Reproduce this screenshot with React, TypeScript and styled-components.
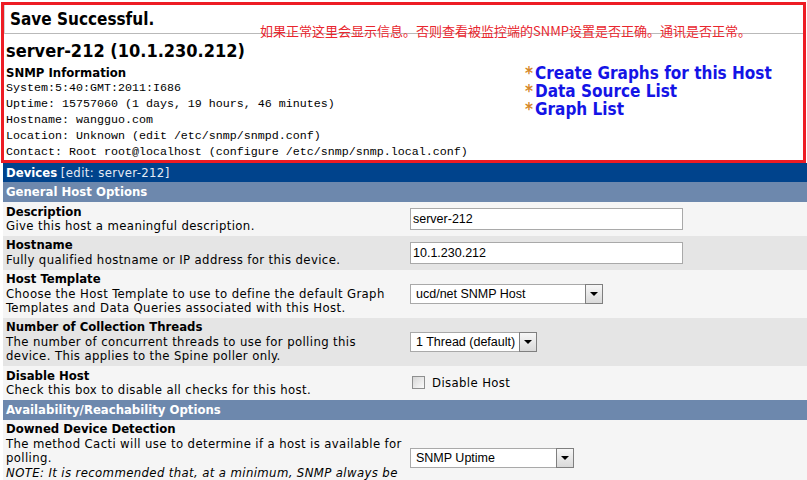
import React from "react";
import styled, { createGlobalStyle } from "styled-components";

const GlobalStyle = createGlobalStyle`
  html, body {
    margin: 0;
    padding: 0;
    background: #fff;
    overflow: hidden;
  }
  body {
    font-family: "DejaVu Sans Condensed", "DejaVu Sans", Verdana, sans-serif;
    font-size: 13px;
    color: #000;
  }
`;

const Page = styled.div`
  width: 807px;
  height: 480px;
  overflow: hidden;
`;

/* red frame round the save result */
const ResultBox = styled.div`
  position: relative;
  margin: 2px 1px 0 1px;
  border: 3px solid #ed1c24;
  background: #fff;
`;

const MessageBar = styled.div`
  height: 28px;
  padding-left: 5px;
  border-left: 1px solid #d4d4d4;
  border-bottom: 1px solid #b9b9b9;
  font-weight: bold;
  font-size: 17px;
  line-height: 28px;
`;

const Annotation = styled.div`
  position: absolute;
  left: 256px;
  top: 19px;
  color: #e8262e;
  font-family: "Noto Sans CJK SC", sans-serif;
  font-size: 13px;
  line-height: 1;
  white-space: nowrap;
`;

const HostInfo = styled.div`
  padding-left: 2px;
`;

const HostTitle = styled.div`
  margin-top: 6px;
  font-size: 18px;
  font-weight: bold;
  line-height: 22px;
`;

const InfoRow = styled.div`
  display: flex;
`;

const SnmpColumn = styled.div`
  width: 519px;
`;

const SnmpTitle = styled.div`
  margin-top: 3px;
  font-weight: bold;
  line-height: 15px;
`;

const MonoLine = styled.div`
  font-family: "Liberation Mono", "Courier New", monospace;
  font-size: 11.67px;
  line-height: 16px;
  white-space: nowrap;
`;

const LinksColumn = styled.div`
  padding-top: 2px;
`;

const ActionLink = styled.a`
  display: block;
  color: #1414e6;
  font-size: 17px;
  font-weight: bold;
  line-height: 18px;
  text-decoration: none;
`;

const Star = styled.span`
  margin-right: 2px;
  color: #d6882a;
`;

const FormTable = styled.div`
  margin-left: 3px;
`;

const TitleBar = styled.div`
  background: #00438c;
  color: #fff;
  height: 19px;
  line-height: 19px;
  padding-left: 3px;
`;

const EditTag = styled.span`
  color: #e4ebf5;
  letter-spacing: 0.38px;
`;

const SectionBar = styled.div`
  background: #6d88ad;
  color: #fff;
  font-weight: bold;
  height: 20px;
  line-height: 20px;
  padding-left: 3px;
`;

const FormRow = styled.div<{ $alt?: boolean }>`
  display: flex;
  background: ${(p) => (p.$alt ? "#e5e5e5" : "#f5f5f5")};
`;

const FieldInfo = styled.div`
  width: 401px;
  flex-shrink: 0;
  padding: 2.5px 0 2.5px 3px;
  line-height: 14.4px;
  letter-spacing: 0.38px;
`;

const FieldLabel = styled.div`
  font-weight: bold;
  letter-spacing: 0;
`;

const FieldControl = styled.div`
  flex: 1;
  display: flex;
  align-items: center;
  padding: 3px;
`;

const TextInput = styled.input`
  box-sizing: border-box;
  width: 273px;
  height: 22px;
  margin: 0;
  padding: 0 2px;
  border: 1px solid #a9a9a9;
  background: #fff;
  font-family: "Liberation Sans", Arial, sans-serif;
  font-size: 12.5px;
  color: #000;
  outline: none;
`;

const SelectBox = styled.div<{ $width: number }>`
  box-sizing: border-box;
  width: ${(p) => p.$width}px;
  height: 20px;
  display: flex;
  align-items: center;
  border: 1px solid #a9a9a9;
  background: #fff;
`;

const SelectText = styled.span`
  flex: 1;
  padding-left: 5px;
  font-family: "Liberation Sans", Arial, sans-serif;
  font-size: 12.5px;
  white-space: nowrap;
  overflow: hidden;
`;

const SelectArrow = styled.span`
  box-sizing: border-box;
  width: 18px;
  height: 20px;
  margin-right: -1px;
  display: flex;
  align-items: center;
  justify-content: center;
  border: 1px solid #7f7f7f;
  background: linear-gradient(#f7f7f7, #d9d9d9);

  &::after {
    content: "";
    border-left: 4px solid transparent;
    border-right: 4px solid transparent;
    border-top: 4px solid #000;
  }
`;

const CheckLabel = styled.label`
  display: flex;
  align-items: center;
  gap: 7px;
  margin-left: 2px;
  letter-spacing: 0.38px;
`;

const CheckSquare = styled.span`
  box-sizing: border-box;
  width: 13px;
  height: 13px;
  border: 1px solid #8e8f8f;
  background: linear-gradient(135deg, #d6d6d6, #fbfbfb);
`;

const Select: React.FC<{ width: number; value: string }> = ({ width, value }) => (
  <SelectBox $width={width}>
    <SelectText>{value}</SelectText>
    <SelectArrow />
  </SelectBox>
);

const snmpLines = [
  "System:5:40:GMT:2011:I686",
  "Uptime: 15757060 (1 days, 19 hours, 46 minutes)",
  "Hostname: wangguo.com",
  "Location: Unknown (edit /etc/snmp/snmpd.conf)",
  "Contact: Root root@localhost (configure /etc/snmp/snmp.local.conf)",
];

const links = ["Create Graphs for this Host", "Data Source List", "Graph List"];

export default function App() {
  return (
    <Page>
      <GlobalStyle />
      <ResultBox>
        <MessageBar>Save Successful.</MessageBar>
        <Annotation>
          如果正常这里会显示信息。否则查看被监控端的SNMP设置是否正确。通讯是否正常。
        </Annotation>
        <HostInfo>
          <HostTitle>server-212 (10.1.230.212)</HostTitle>
          <InfoRow>
            <SnmpColumn>
              <SnmpTitle>SNMP Information</SnmpTitle>
              {snmpLines.map((line) => (
                <MonoLine key={line}>{line}</MonoLine>
              ))}
            </SnmpColumn>
            <LinksColumn>
              {links.map((l) => (
                <ActionLink key={l} href="#">
                  <Star>*</Star>
                  {l}
                </ActionLink>
              ))}
            </LinksColumn>
          </InfoRow>
        </HostInfo>
      </ResultBox>

      <FormTable>
        <TitleBar>
          <b>Devices</b> <EditTag>[edit: server-212]</EditTag>
        </TitleBar>
        <SectionBar>General Host Options</SectionBar>

        <FormRow>
          <FieldInfo>
            <FieldLabel>Description</FieldLabel>
            Give this host a meaningful description.
          </FieldInfo>
          <FieldControl>
            <TextInput defaultValue="server-212" />
          </FieldControl>
        </FormRow>

        <FormRow $alt>
          <FieldInfo>
            <FieldLabel>Hostname</FieldLabel>
            Fully qualified hostname or IP address for this device.
          </FieldInfo>
          <FieldControl>
            <TextInput defaultValue="10.1.230.212" />
          </FieldControl>
        </FormRow>

        <FormRow>
          <FieldInfo>
            <FieldLabel>Host Template</FieldLabel>
            Choose the Host Template to use to define the default Graph Templates and Data
            Queries associated with this Host.
          </FieldInfo>
          <FieldControl>
            <Select width={193} value="ucd/net SNMP Host" />
          </FieldControl>
        </FormRow>

        <FormRow $alt>
          <FieldInfo>
            <FieldLabel>Number of Collection Threads</FieldLabel>
            The number of concurrent threads to use for polling this
            <br />
            device. This applies to the Spine poller only.
          </FieldInfo>
          <FieldControl>
            <Select width={127} value="1 Thread (default)" />
          </FieldControl>
        </FormRow>

        <FormRow>
          <FieldInfo>
            <FieldLabel>Disable Host</FieldLabel>
            Check this box to disable all checks for this host.
          </FieldInfo>
          <FieldControl>
            <CheckLabel>
              <CheckSquare />
              Disable Host
            </CheckLabel>
          </FieldControl>
        </FormRow>

        <SectionBar>Availability/Reachability Options</SectionBar>

        <FormRow>
          <FieldInfo>
            <FieldLabel>Downed Device Detection</FieldLabel>
            The method Cacti will use to determine if a host is available for polling.
            <br />
            <i>NOTE: It is recommended that, at a minimum, SNMP always be selected.</i>
          </FieldInfo>
          <FieldControl>
            <Select width={164} value="SNMP Uptime" />
          </FieldControl>
        </FormRow>
      </FormTable>
    </Page>
  );
}
